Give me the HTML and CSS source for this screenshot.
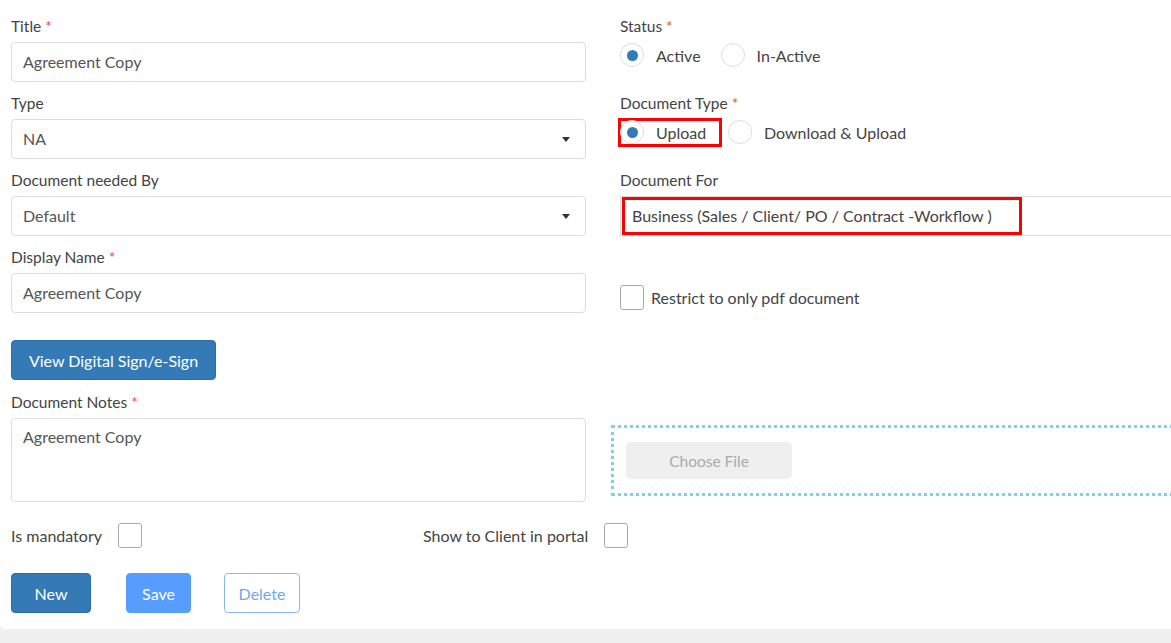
FILE: index.html
```html
<!DOCTYPE html>
<html>
<head>
<meta charset="utf-8">
<link rel="stylesheet" href="styles.css">
</head>
<body>
<div class="card">
  <div class="grid">
    <div class="field">
      <div class="label">Title <span class="req">*</span></div>
      <div class="input">Agreement Copy</div>
    </div>
    <div class="field">
      <div class="label">Status <span class="req">*</span></div>
      <div class="radios">
        <span class="radio checked"></span><span class="rtext">Active</span>
        <span class="radio"></span><span class="rtext">In-Active</span>
      </div>
    </div>

    <div class="field">
      <div class="label">Type</div>
      <div class="input select">NA<span class="caret"></span></div>
    </div>
    <div class="field">
      <div class="label">Document Type <span class="req">*</span></div>
      <div class="radios r2">
        <span class="hl"><span class="radio checked"></span><span class="rtext">Upload</span></span>
        <span class="radio"></span><span class="rtext">Download &amp; Upload</span>
      </div>
    </div>

    <div class="field">
      <div class="label">Document needed By</div>
      <div class="input select">Default<span class="caret"></span></div>
    </div>
    <div class="field">
      <div class="label">Document For</div>
      <div class="input wide"><span class="hlbox">Business (Sales / Client/ PO / Contract -Workflow )</span></div>
    </div>

    <div class="field">
      <div class="label">Display Name <span class="req">*</span></div>
      <div class="input">Agreement Copy</div>
    </div>
    <div class="field restrict">
      <span class="check"></span><span class="ctext">Restrict to only pdf document</span>
    </div>

    <div class="field">
      <button class="btn primary sign">View Digital Sign/e-Sign</button>
      <div class="label notes-label">Document Notes <span class="req">*</span></div>
      <div class="textarea">Agreement Copy</div>
    </div>
    <div class="field">
      <div class="drop"><span class="choose">Choose File</span></div>
    </div>
  </div>

  <div class="checks">
    <div class="chk first"><span class="ctext2">Is mandatory</span><span class="check"></span></div>
    <div class="chk"><span class="ctext2">Show to Client in portal</span><span class="check"></span></div>
  </div>

  <div class="actions">
    <button class="btn primary new">New</button>
    <button class="btn light save">Save</button>
    <button class="btn outline del">Delete</button>
  </div>
</div>
</body>
</html>
```

FILE: styles.css
```css
html, body {
  margin: 0;
  padding: 0;
  background: #f0f0f0;
  overflow: hidden;
  font-family: Lato, "Open Sans", sans-serif;
  font-size: 16px;
  color: #444;
}
.card {
  background: #fff;
  width: 1200px;
  padding: 16px 0 16px 11px;
  border-radius: 0 0 0 6px;
  box-sizing: border-box;
}
.grid {
  display: grid;
  grid-template-columns: 575px 575px;
  column-gap: 34px;
  row-gap: 11px;
}
.field {
  display: flex;
  flex-direction: column;
}
.label {
  height: 20px;
  line-height: 20px;
  font-size: 15.5px;
  color: #444;
  margin-bottom: 6px;
}
.req { color: #d9534f; }
.input {
  height: 40px;
  box-sizing: border-box;
  border: 1px solid #ddd;
  border-radius: 4px;
  padding: 0 11px;
  line-height: 38px;
  color: #555;
  position: relative;
}
.select .caret {
  position: absolute;
  right: 15px;
  top: 17px;
  width: 0;
  height: 0;
  border-left: 4px solid transparent;
  border-right: 4px solid transparent;
  border-top: 5px solid #333;
}
.input.wide {
  width: 600px;
  border-radius: 0;
  padding: 0;
  border-right: none;
}
.hlbox {
  display: inline-block;
  box-sizing: border-box;
  width: 400px;
  height: 38px;
  margin: 0 0 0 1px;
  border: 3px solid #f00;
  padding-left: 7px;
  line-height: 31px;
  color: #444;
}
.radios {
  display: flex;
  align-items: center;
  height: 24px;
  margin-top: 1px;
}
.radios.r2 { margin-top: 1px; }
.radio {
  width: 24px;
  height: 24px;
  box-sizing: border-box;
  border: 1px solid #ddd;
  border-radius: 50%;
  background: #fff;
  flex: none;
  position: relative;
}
.radio.checked::after {
  content: "";
  position: absolute;
  left: 6px;
  top: 6px;
  width: 11px;
  height: 11px;
  border-radius: 50%;
  background: #337ab7;
}
.rtext {
  margin-left: 12px;
  margin-right: 20px;
  color: #444;
}
.hl {
  display: flex;
  align-items: center;
  height: 23px;
  width: 98px;
  margin-left: 1px;
  outline: 3px solid #f00;
  margin-right: 9px;
}
.hl .radio { margin-left: -1px; }
.hl .rtext { margin-right: 0; }
.r2 .rtext:last-child { margin-left: 12px; }
.restrict {
  flex-direction: row;
  align-items: center;
  padding-top: 34px;
}
.check {
  width: 24px;
  height: 25px;
  box-sizing: border-box;
  border: 1px solid #aaa;
  border-radius: 3px;
  background: #fff;
  flex: none;
}
.ctext { margin-left: 7px; color: #444; }
.btn {
  font-family: Lato, "Open Sans", sans-serif;
  font-size: 16px;
  height: 40px;
  border-radius: 4px;
  border: 1px solid transparent;
  cursor: pointer;
  padding: 0;
}
.primary { background: #337ab7; color: #fff; border-color: #2e6da4; }
.sign {
  width: 205px;
  margin-top: 16px;
  margin-bottom: 12px;
}
.notes-label { margin-bottom: 6px; }
.textarea {
  height: 84px;
  box-sizing: border-box;
  border: 1px solid #ddd;
  border-radius: 4px;
  padding: 8px 11px;
  color: #555;
}
.drop {
  margin-top: 101px;
  margin-left: -9px;
  height: 71px;
  width: 600px;
  box-sizing: border-box;
  border: 3px dotted #7fcfe9;
  border-right: none;
  padding: 14px 0 0 12px;
}
.choose {
  display: flex;
  align-items: center;
  justify-content: center;
  width: 166px;
  height: 37px;
  background: #efefef;
  border-radius: 5px;
  color: #aaa;
  font-size: 15.5px;
}
.checks {
  display: flex;
  align-items: center;
  margin-top: 21px;
  height: 25px;
}
.chk {
  display: flex;
  align-items: center;
}
.chk.first { width: 412px; }
.ctext2 { margin-right: 16px; color: #444; }
.actions {
  display: flex;
  margin-top: 25px;
}
.new { width: 80px; }
.light { background: #579dff; color: #fff; width: 65px; border-color: #579dff; margin-left: 35px; }
.outline { background: #fff; color: #6fa8f5; border-color: #8ab8f7; width: 76px; margin-left: 33px; }
```
